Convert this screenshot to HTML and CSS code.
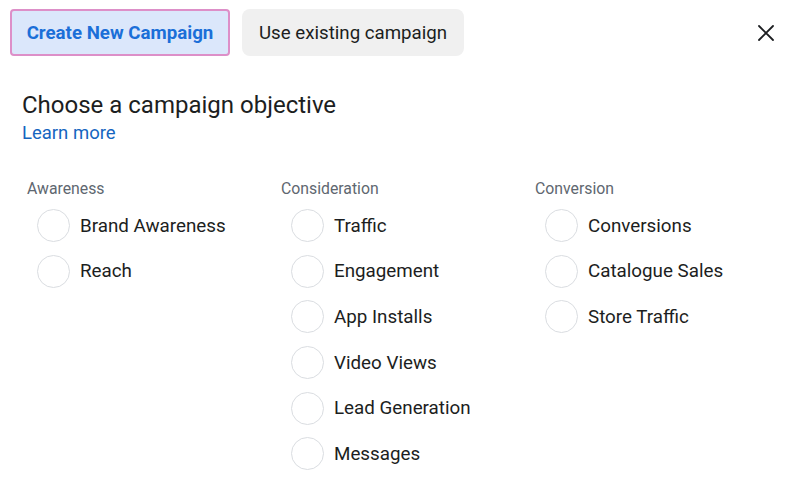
FILE: index.html
```html
<!DOCTYPE html>
<html lang="en">
<head>
  <meta charset="UTF-8" />
  <title>Choose a campaign objective</title>
  <link rel="stylesheet" href="styles.css">
</head>
<body>

<div class="dialog">
  <!-- Top tabs -->
  <div class="topbar">
    <button class="tab tab-active">Create New Campaign</button>
    <button class="tab">Use existing campaign</button>
    <button class="close" aria-label="Close">
      <svg width="16" height="16" viewBox="0 0 16 16">
        <path d="M1 1 L15 15 M15 1 L1 15" stroke="#1c1e21" stroke-width="1.8" stroke-linecap="round" />
      </svg>
    </button>
  </div>

  <h1 class="title">Choose a campaign objective</h1>
  <a class="learn" href="#">Learn more</a>

  <!-- Objective columns -->
  <div class="objectives">
    <div class="group">
      <div class="group-label">Awareness</div>
      <label class="option"><span class="radio"></span>Brand Awareness</label>
      <label class="option"><span class="radio"></span>Reach</label>
    </div>
    <div class="group">
      <div class="group-label">Consideration</div>
      <label class="option"><span class="radio"></span>Traffic</label>
      <label class="option"><span class="radio"></span>Engagement</label>
      <label class="option"><span class="radio"></span>App Installs</label>
      <label class="option"><span class="radio"></span>Video Views</label>
      <label class="option"><span class="radio"></span>Lead Generation</label>
      <label class="option"><span class="radio"></span>Messages</label>
    </div>
    <div class="group">
      <div class="group-label">Conversion</div>
      <label class="option"><span class="radio"></span>Conversions</label>
      <label class="option"><span class="radio"></span>Catalogue Sales</label>
      <label class="option"><span class="radio"></span>Store Traffic</label>
    </div>
  </div>
</div>

</body>
</html>
```

FILE: styles.css
```css
body {
  margin: 0;
  font-family: Roboto, "Liberation Sans", sans-serif;
  background-color: #fff;
  color: #1c1e21;
}

.dialog {
  width: 800px;
  height: 481px;
  overflow: hidden;
}

.topbar {
  display: flex;
  align-items: center;
  gap: 12px;
  padding: 9px 17px 0 10px;
}

.tab {
  height: 47px;
  padding: 0 15px;
  font-family: inherit;
  font-size: 18.7px;
  white-space: nowrap;
  color: #1c1e21;
  background-color: #f0f0f0;
  border: 2px solid transparent;
  border-radius: 8px;
  cursor: pointer;
}

.tab-active {
  width: 220px;
  padding: 0;
  font-weight: bold;
  color: #1b6fd8;
  background-color: #dbe7fb;
  border-color: #dd8fc8;
  border-radius: 4px;
}

.close {
  margin-left: auto;
  width: 34px;
  height: 34px;
  padding: 0;
  display: flex;
  align-items: center;
  justify-content: center;
  background: none;
  border: none;
  cursor: pointer;
}

.title {
  margin: 34px 0 0 22px;
  font-size: 24px;
  font-weight: normal;
  line-height: 30px;
}

.learn {
  display: block;
  width: fit-content;
  margin: 2px 0 0 22px;
  font-size: 18.5px;
  line-height: 22px;
  color: #1565c0;
  text-decoration: none;
}

.objectives {
  display: grid;
  grid-template-columns: 254px 254px 254px;
  padding: 0 0 0 27px;
  margin-top: 36px;
}

.group-label {
  font-size: 15.8px;
  line-height: 18px;
  color: #606770;
  margin-bottom: 5px;
}

.option {
  display: flex;
  align-items: center;
  gap: 10px;
  height: 45.6px;
  padding-left: 10px;
  font-size: 18.8px;
  cursor: pointer;
}

.radio {
  width: 31px;
  height: 31px;
  border: 1.5px solid #dadde1;
  border-radius: 50%;
  flex-shrink: 0;
}
```
